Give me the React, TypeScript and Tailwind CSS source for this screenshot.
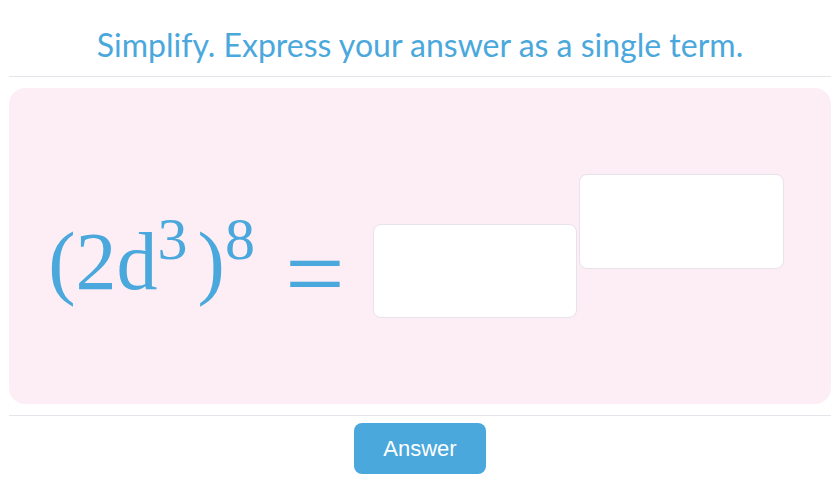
import React from "react";

const App: React.FC = () => {
  return (
    <div className="w-[840px] h-[501px] bg-white px-[9px] flex flex-col">
      {/* Prompt */}
      <div className="h-[77px] border-b border-[#e6e4ea] flex items-end justify-center pb-[11px]">
        <h1 className="font-['Lato',sans-serif] text-[32px] leading-[40px] text-[#4aa8dc]">
          Simplify. Express your answer as a single term.
        </h1>
      </div>

      {/* Question panel */}
      <div className="mt-[11px] h-[316px] rounded-[16px] bg-[#fdeef5] flex items-center justify-center">
        <div className="flex items-center pr-[8px]">
          <div className="mt-[32px] font-['Liberation_Serif',serif] text-[82px] leading-none text-[#4aa8dc] whitespace-nowrap">
            (2d<sup className="text-[60px] -top-[30px] mr-[10px]">3</sup>)<sup className="text-[60px] -top-[30px]">8</sup>
          </div>
          <div className="mt-[56px] font-['Liberation_Serif',serif] text-[106px] leading-none text-[#4aa8dc] ml-[30px] mr-[28px]">
            =
          </div>
          <div className="flex items-start">
            <div className="mt-[50px] w-[204px] h-[94px] bg-white border border-[#e8e2ea] rounded-[8px]" />
            <div className="ml-[2px] w-[205px] h-[95px] bg-white border border-[#e8e2ea] rounded-[8px]" />
          </div>
        </div>
      </div>

      {/* Footer */}
      <div className="mt-[11px] border-t border-[#e6e4ea] flex justify-center pt-[7px]">
        <button className="w-[132px] h-[51px] rounded-[8px] bg-[#4aa8dc] text-white font-['Liberation_Sans',sans-serif] text-[22px]">
          Answer
        </button>
      </div>
    </div>
  );
};

export default App;
